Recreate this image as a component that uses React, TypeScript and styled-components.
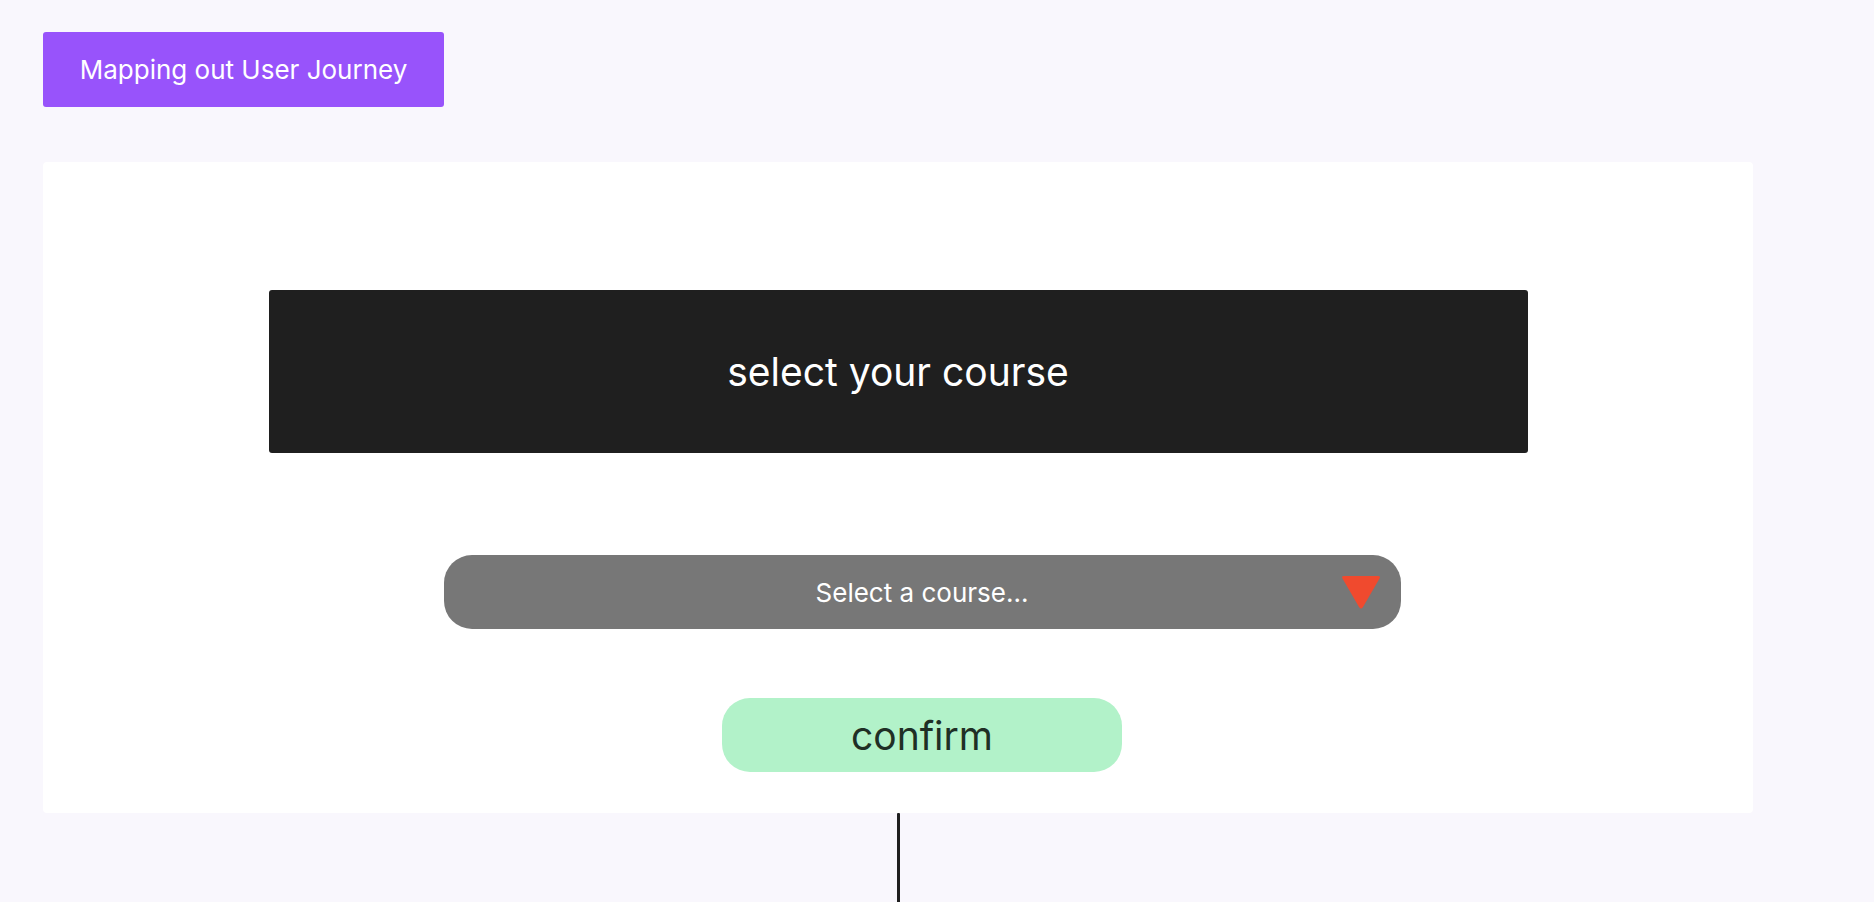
import styled, { createGlobalStyle } from 'styled-components'

const GlobalStyle = createGlobalStyle`
  html, body {
    margin: 0;
    padding: 0;
    background: #f9f7fd;
    font-family: Inter, 'Noto Sans', sans-serif;
  }
`

const Page = styled.div`
  display: flex;
  flex-direction: column;
  align-items: flex-start;
  padding: 32px 0 0 43px;
  width: 1710px;
  min-height: 100vh;
  box-sizing: content-box;
  overflow: hidden;
`

const TitleTag = styled.div`
  width: 401px;
  height: 75px;
  background: #9853fb;
  color: #ffffff;
  border-radius: 3px;
  display: flex;
  align-items: center;
  justify-content: center;
  font-size: 26px;
  margin-bottom: 55px;
`

const Card = styled.div`
  width: 1710px;
  height: 651px;
  background: #ffffff;
  border-radius: 4px;
  box-sizing: border-box;
  padding-top: 128px;
  display: flex;
  flex-direction: column;
  align-items: center;
`

const Heading = styled.div`
  width: 1259px;
  height: 163px;
  background: #1f1f1f;
  color: #ffffff;
  border-radius: 3px;
  display: flex;
  align-items: center;
  justify-content: center;
  font-size: 39px;
`

const Form = styled.div`
  display: flex;
  flex-direction: column;
  align-items: center;
  padding-left: 48px;
  margin-top: 102px;
  gap: 69px;
`

const SelectBox = styled.div`
  position: relative;
  width: 957px;
  height: 74px;
  background: #777777;
  border-radius: 28px;
  color: #ffffff;
  font-size: 26px;
  display: flex;
  align-items: center;
  justify-content: center;
`

const Arrow = styled.svg`
  position: absolute;
  right: 20px;
  top: 20px;
`

const ConfirmButton = styled.button`
  width: 400px;
  height: 74px;
  border: none;
  border-radius: 28px;
  background: #b2f2c9;
  color: #1f2f25;
  font-family: Inter, 'Noto Sans', sans-serif;
  font-size: 39px;
  padding: 0;
  cursor: pointer;
`

const Connector = styled.div`
  width: 3px;
  height: 100px;
  background: #1f1f1f;
  margin-left: 854px;
  border-radius: 1px;
`

export default function App () {
  return (
    <>
      <GlobalStyle />
      <Page>
        <TitleTag>Mapping out User Journey</TitleTag>
        <Card>
          <Heading>select your course</Heading>
          <Form>
            <SelectBox>
              Select a course...
              <Arrow width='40' height='35' viewBox='0 0 40 35'>
                <path d='M3 1 H37 Q40 1 38.5 3.5 L22 32 Q20 35 18 32 L1.5 3.5 Q0 1 3 1 Z' fill='#f04a2e' />
              </Arrow>
            </SelectBox>
            <ConfirmButton>confirm</ConfirmButton>
          </Form>
        </Card>
        <Connector />
      </Page>
    </>
  )
}
